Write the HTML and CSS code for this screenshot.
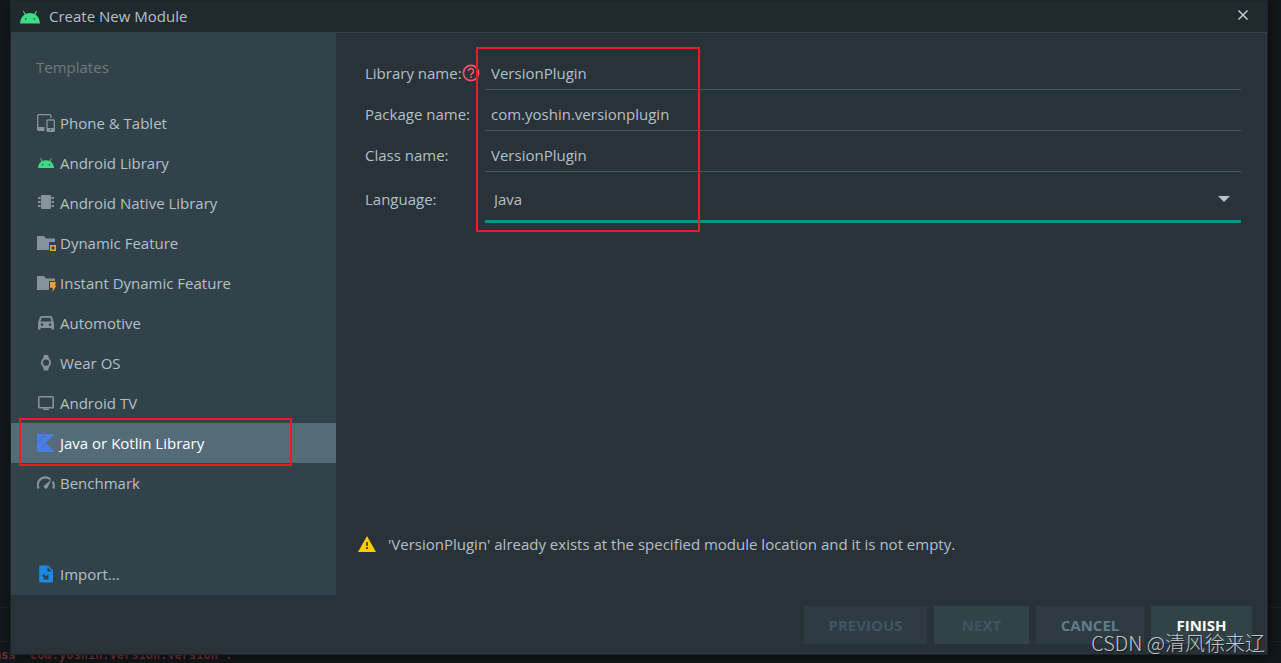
FILE: index.html
```
<!DOCTYPE html>
<html lang="en">
<head>
<meta charset="utf-8">
<title>Create New Module</title>
<link rel="stylesheet" href="styles.css">
</head>
<body>
<div class="editor" aria-hidden="true">
  <div class="editor-rule"></div>
  <div class="editor-rule"></div>
  <div class="editor-error">ass 'com.yoshin.version.version'.</div>
</div>
<main class="dialog">
  <header class="titlebar">
    <svg class="logo" width="20" height="14" viewBox="0 0 20 14"><path d="M0 13.5C.3 9 2 6 4.700 4.400L2.900 1.300l.9-.5 1.900 3.200a11 11 0 0 1 8.600 0L16.200.8l.9.5-1.800 3.100C18 6 19.700 9 20 13.500z" fill="#3ddc84"/><circle cx="5.700" cy="9" r=".8" fill="#20292d"/><circle cx="14.300" cy="9" r=".8" fill="#20292d"/></svg>
    <h1 class="title">Create New Module</h1>
    <button class="close" aria-label="Close"><svg width="10" height="10" viewBox="0 0 10 10"><path d="M.5.5l9 9M9.500.5l-9 9" stroke="#c3ced3" stroke-width="1.500"/></svg></button>
  </header>
  <div class="body">
    <nav class="sidebar" aria-label="Templates">
      <h2 class="heading">Templates</h2>
      <ul class="templates">
        <li><button class="item"><svg class="icon" viewBox="0 0 18 18"><path d="M14 4V2a1.300 1.300 0 0 0-1.300-1.300H2A1.300 1.300 0 0 0 .7 2v13.500h6.500" fill="none" stroke="#87939a" stroke-width="1.300"/><path d="M.5 13h7v4H1.500a1 1 0 0 1-1-1z" fill="#87939a"/><rect x="10" y="6" width="7.300" height="11.300" rx="1" fill="none" stroke="#87939a" stroke-width="1.300"/><path d="M10 14h7.300v3.500H10z" fill="#87939a"/><circle cx="13.600" cy="15.700" r=".7" fill="#32424a"/></svg>Phone &amp; Tablet</button></li>
        <li><button class="item"><svg class="icon" viewBox="0 0 18 18"><path d="M1 14c.2-3.300 1.500-5.400 3.600-6.600L3.200 4.600l.8-.4 1.500 2.700a9 9 0 0 1 7 0L14 4.200l.8.4-1.400 2.800C15.500 8.600 16.800 10.700 17 14z" fill="#3ddc84"/><circle cx="5.500" cy="10.800" r=".8" fill="#32424a"/><circle cx="12.500" cy="10.800" r=".8" fill="#32424a"/></svg>Android Library</button></li>
        <li><button class="item"><svg class="icon" viewBox="0 0 18 18"><path d="M4 2q0-1 1-1h8q1 0 1 1v12q0 1-1 1H5q-1 0-1-1zM1 3h2.500v2H1zm13.500 0H17v2h-2.500zM1 7h2.500v2H1zm13.500 0H17v2h-2.500zM1 11h2.500v2H1zm13.500 0H17v2h-2.500z" fill="#87939a"/></svg>Android Native Library</button></li>
        <li><button class="item"><svg class="icon wide" viewBox="0 0 20 18"><path d="M0 2h7l2 2.500h9V8h-6v8H0z" fill="#87939a"/><path d="M13.800 11.800h4.400v4.400h-4.400z" fill="none" stroke="#f0a32c" stroke-width="1.600"/></svg>Dynamic Feature</button></li>
        <li><button class="item"><svg class="icon wide" viewBox="0 0 20 18"><path d="M0 2h7l2 2.500h9V7h-6v9H0z" fill="#87939a"/><path d="M13 8h6l-1 3.500h1.500L15.500 18l.3-4.300H13z" fill="#f0a32c"/></svg>Instant Dynamic Feature</button></li>
        <li><button class="item"><svg class="icon" viewBox="0 0 18 18"><path fill-rule="evenodd" d="M4.300 2h9.400l1.300.8L17 9v6.500h-2.500V14h-11v1.500H1V9l2-6.200zm.4 1.700L3.400 7.500h11.200l-1.300-3.800zM5 9.300a1.300 1.300 0 1 0 0 2.600 1.300 1.300 0 0 0 0-2.600zm8 0a1.300 1.300 0 1 0 0 2.600 1.300 1.300 0 0 0 0-2.600z" fill="#87939a"/></svg>Automotive</button></li>
        <li><button class="item"><svg class="icon" viewBox="0 0 18 18"><path fill-rule="evenodd" d="M7 1h4l1 3.500a5.500 5.500 0 0 1 0 8.500L11 16.500H7L6 13a5.500 5.500 0 0 1 0-8.500zM9 5.600a3.100 3.100 0 1 0 0 6.200 3.100 3.100 0 0 0 0-6.200z" fill="#87939a"/></svg>Wear OS</button></li>
        <li><button class="item"><svg class="icon" viewBox="0 0 18 18"><rect x="1.800" y="2.800" width="14.400" height="10.900" rx=".8" fill="none" stroke="#87939a" stroke-width="1.600"/><path d="M6 14.500h6V16H6z" fill="#87939a"/></svg>Android TV</button></li>
        <li class="marked"><button class="item selected" aria-current="true"><svg class="icon" viewBox="0 0 18 18"><path d="M0 0h17.500L9 9l8.500 9H0z" fill="#4b7de8"/><path d="M0 9L8.500 0M0 18l9-9" stroke="#456fbe" stroke-width=".8"/></svg>Java or Kotlin Library</button><span class="mark mark-item"></span></li>
        <li><button class="item"><svg class="icon" viewBox="0 0 18 18"><path d="M1.700 14.500a7.500 7.500 0 0 1 11.800-9M15.700 7.500a8 8 0 0 1 .6 7" fill="none" stroke="#87939a" stroke-width="2.200"/><path d="M14.500 5.500L10.700 13.500a2 2 0 1 1-3.200-2.300z" fill="#87939a"/></svg>Benchmark</button></li>
      </ul>
      <button class="item import"><svg class="icon" viewBox="0 0 18 18"><path d="M3.500.5H11l5 5V16.500a1 1 0 0 1-1 1H3.500a1.300 1.300 0 0 1-1.300-1.300V2A1.300 1.300 0 0 1 3.500.5z" fill="#1e88e5"/><path d="M10.500 2v4.500H15M11.500 9v5.500H6L7.300 13 5 10.700 6.700 9 9 11.300z" fill="#32424a"/></svg>Import...</button>
    </nav>
    <section class="content">
      <form class="form" id="module">
        <div class="label"><label for="library">Library name:</label><svg width="18" height="18" viewBox="0 0 18 18"><circle cx="9" cy="9" r="7.600" fill="none" stroke="#f2556d" stroke-width="1.700"/><path d="M6.500 7.200a2.500 2.500 0 1 1 3.700 2.100c-.9.600-1.200.9-1.200 1.900" fill="none" stroke="#f2556d" stroke-width="1.600"/><circle cx="9" cy="13" r="1" fill="#f2556d"/></svg></div>
        <input class="field" id="library" type="text" value="VersionPlugin">
        <label class="label" for="package">Package name:</label>
        <input class="field" id="package" type="text" value="com.yoshin.versionplugin">
        <label class="label" for="class">Class name:</label>
        <input class="field" id="class" type="text" value="VersionPlugin">
        <label class="label" for="language">Language:</label>
        <div class="picker">
          <select class="choice" id="language"><option>Java</option><option>Kotlin</option></select>
          <svg class="arrow" width="12" height="6" viewBox="0 0 12 6"><path d="M0 0h12L6 6z" fill="#b5c2c9"/></svg>
        </div>
        <span class="mark mark-form"></span>
      </form>
      <p class="warning"><svg width="18" height="16" viewBox="0 0 18 16"><path d="M9 0l9 16H0z" fill="#ffcc00"/><path d="M8 6h2v4H8zm0 5h2v2H8z" fill="#59501a"/></svg>'VersionPlugin' already exists at the specified module location and it is not empty.</p>
    </section>
  </div>
  <footer class="footer">
    <button class="btn previous" disabled>PREVIOUS</button>
    <button class="btn next" disabled>NEXT</button>
    <button class="btn cancel">CANCEL</button>
    <button class="btn finish">FINISH</button>
  </footer>
</main>
<div class="watermark">CSDN @清风徐来辽</div>
</body>
</html>
```
FILE: styles.css
```
* { box-sizing: border-box; }
body {
  margin: 0;
  min-height: 100vh;
  padding: 1px 14px 9px 11px;
  display: flex;
  position: relative;
  overflow: hidden;
  background: #12181b;
  color: #b3c0c6;
  font: 15px/20px "Open Sans", "Noto Sans", sans-serif;
}
button, input, select { font: inherit; color: inherit; border: 0; border-radius: 0; background: none; margin: 0; }
h1, h2, p, ul { margin: 0; padding: 0; font-size: inherit; font-weight: 400; }
ul { list-style: none; }
svg { flex: none; }

.editor { position: absolute; inset: auto 0 0 0; }
.editor-rule { height: 34px; border-top: 1px solid #1b2225; }
.editor-error {
  margin-top: -30px;
  height: 18px;
  font: bold 12px/20px "DejaVu Sans Mono", monospace;
  text-indent: -6px;
  color: #78303a;
  white-space: pre;
}

.dialog {
  position: relative;
  flex: 1;
  display: flex;
  flex-direction: column;
  background: #283238;
  box-shadow: 0 0 0 1px #1d2528, 2px 2px 12px #000000a0;
}
.titlebar {
  display: flex;
  align-items: center;
  gap: 9px;
  height: 32px;
  padding: 0 19px 0 9px;
  background: #20292e;
  border-bottom: 1px solid #2f414b;
}
.title { flex: 1; padding-bottom: 2px; }
.close { display: flex; padding: 0; margin-bottom: 3px; }

.body { flex: 1; display: flex; }
.sidebar {
  flex: none;
  width: 325px;
  display: flex;
  flex-direction: column;
  background: #32424a;
}
.heading { padding: 24px 25px 26px; color: #747777; }
.item {
  display: flex;
  align-items: center;
  gap: 5px;
  width: 100%;
  height: 40px;
  padding: 0 26px;
  text-align: left;
}
.icon { width: 18px; height: 18px; }
.wide { width: 20px; margin-right: -2px; }
.selected { background: #546c78; color: #fff; }
.import { margin: auto 0 1px; }
.marked { position: relative; }
.mark { position: absolute; border: 2px solid #ed1c24; pointer-events: none; }
.mark-item { inset: -5px 44px -3px 8px; }

.content {
  flex: 1;
  display: flex;
  flex-direction: column;
  justify-content: space-between;
  padding: 16px 26px 41px 22px;
}
.form {
  position: relative;
  display: grid;
  grid-template-columns: 113px 1fr;
  column-gap: 7px;
  padding-left: 7px;
}
.label { display: flex; align-items: center; height: 40px; padding-top: 8px; white-space: nowrap; }
.field { height: 41px; min-width: 0; padding: 8px 6px 0; border-bottom: 1px solid #415764; outline: 0; }
.picker { display: flex; align-items: center; height: 51px; padding: 6px 11px 0 9px; border-bottom: 3px solid #009688; }
.label:has(+ .picker) { height: 46px; }
.choice { flex: 1; appearance: none; padding: 0; outline: 0; }
.arrow { pointer-events: none; }
.mark-form { width: 224px; height: 185px; top: -2px; left: 118px; }
.warning { display: flex; align-items: center; gap: 12px; }

.footer { display: flex; justify-content: flex-end; gap: 7px; padding: 11px 15px 10px; }
.btn { height: 38px; background: #2e3b43; font-weight: 700; }
.previous { width: 123px; color: #3f5565; }
.next { width: 95px; background: #314347; color: #3f5565; }
.cancel { width: 108px; color: #607d8b; }
.finish { width: 101px; background: #314347; color: #fff; }

.watermark {
  position: absolute;
  right: 16px;
  bottom: 6px;
  font: 20px/28px "Noto Sans CJK SC", sans-serif;
  font-weight: 300;
  color: #c4c8ca;
  text-shadow: 1px 1px 1px #0008;
}
```
